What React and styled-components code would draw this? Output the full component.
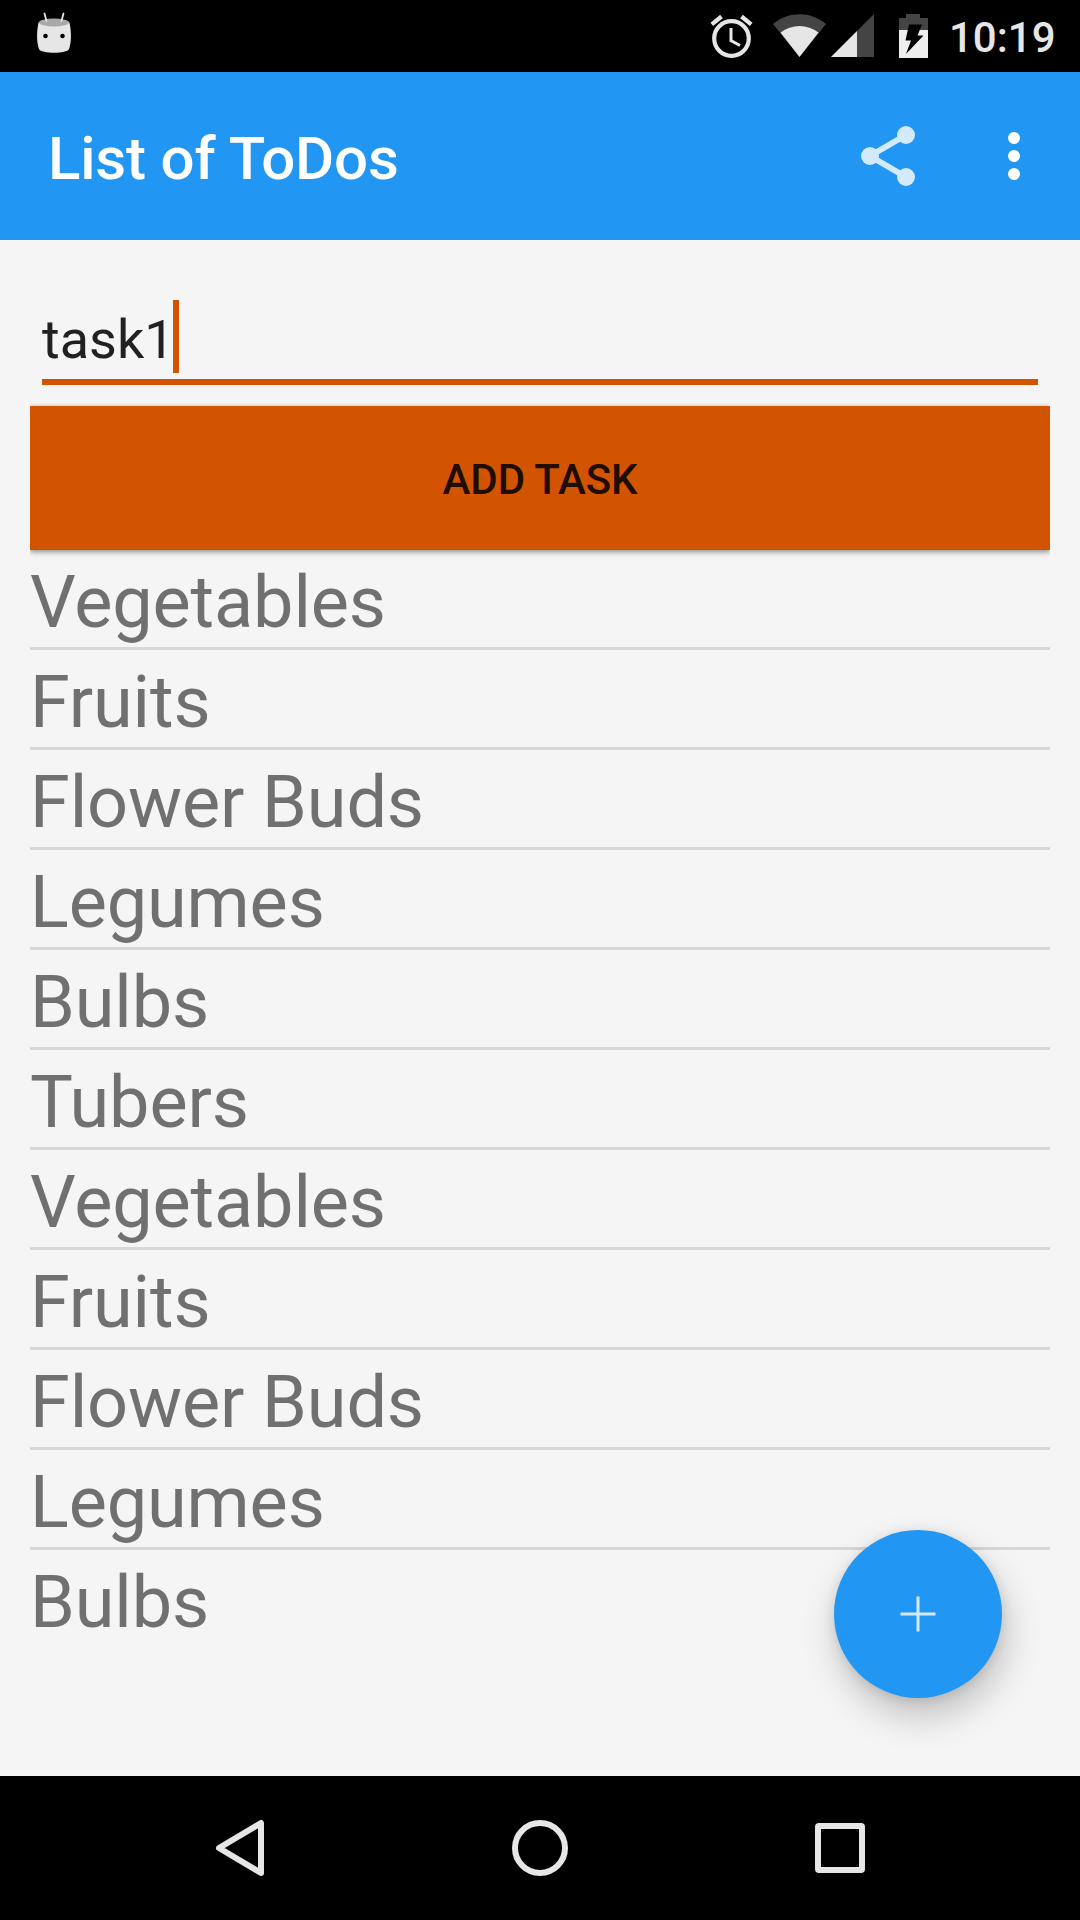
import React from "react";
import styled, { createGlobalStyle } from "styled-components";

const GlobalStyle = createGlobalStyle`
  * { box-sizing: border-box; }
  body { margin: 0; background: #f4f4f4; font-family: Roboto, sans-serif; }
`;

const Screen = styled.div`
  position: relative;
  display: flex;
  flex-direction: column;
  width: 1080px;
  height: 1920px;
  overflow: hidden;
  background: #f5f5f5;
`;

const StatusBar = styled.header`
  display: flex;
  justify-content: space-between;
  align-items: center;
  height: 72px;
  background: #000;
`;

const StatusGlyphs = styled.svg`
  display: block;
  width: ${(p) => p.$width}px;
  height: 72px;
`;

const StatusGroup = styled.div`
  display: flex;
  align-items: center;
`;

const Clock = styled.time`
  width: 131px;
  padding: 3px 0 0 0;
  color: #e6e6e6;
  font-size: 42px;
  font-weight: 500;
  line-height: 49px;
  white-space: nowrap;
`;

const AppBar = styled.div`
  display: flex;
  align-items: center;
  height: 168px;
  padding: 0 12px 0 48px;
  background: #2196f3;
`;

const Title = styled.h1`
  flex: 1;
  margin: 0;
  padding-top: 6px;
  color: #fff;
  font-size: 60px;
  font-weight: 500;
  letter-spacing: -0.17px;
  line-height: 70px;
`;

const ToolButton = styled.button`
  display: flex;
  justify-content: center;
  align-items: center;
  width: ${(p) => p.$width}px;
  height: 144px;
  padding: 0;
  border: 0;
  background: none;
`;

const Content = styled.main`
  flex: 1;
  padding: 60px 30px 0;
`;

const Field = styled.div`
  display: flex;
  height: 85px;
  margin: 0 12px 21px;
  border-bottom: 6px solid #d35400;
`;

const FieldText = styled.span`
  width: 131px;
  padding-top: 7px;
  color: #212121;
  font-size: 54px;
  line-height: 66px;
`;

const Caret = styled.span`
  width: 6px;
  height: 73px;
  background: #d35400;
`;

const AddButton = styled.button`
  display: block;
  width: 100%;
  height: 144px;
  padding: 2px 0 0;
  border: 0;
  background: #d35400;
  box-shadow: 0 3px 5px rgba(0, 0, 0, 0.28), 0 0 4px rgba(0, 0, 0, 0.22);
  clip-path: inset(-10px 0 -12px 0);
  color: #200d00;
  font-family: inherit;
  font-size: 42px;
  font-weight: 500;
  letter-spacing: -0.1px;
  line-height: 49px;
`;

const List = styled.ul`
  margin: 0;
  padding: 0;
  list-style: none;
`;

const Item = styled.li`
  height: 100px;
  padding-top: 11px;
  border-bottom: 3px solid #d7d7d7;
  color: #707070;
  font-size: 72px;
  letter-spacing: -0.12px;
  line-height: 84px;

  &:last-child { border-bottom: 0; }
`;

const Fab = styled.button`
  position: absolute;
  right: 78px;
  bottom: 222px;
  display: flex;
  justify-content: center;
  align-items: center;
  width: 168px;
  height: 168px;
  padding: 0;
  border: 0;
  border-radius: 50%;
  background: #2196f3;
  box-shadow: 4px 18px 36px rgba(0, 0, 0, 0.22), 0 2px 12px rgba(0, 0, 0, 0.11);
`;

const NavBar = styled.nav`
  display: flex;
  justify-content: center;
  height: 144px;
  background: #000;
`;

const NavButton = styled.button`
  display: flex;
  justify-content: center;
  align-items: center;
  width: 300px;
  padding: 0;
  border: 0;
  background: none;
`;

const tasks = [
  "Vegetables", "Fruits", "Flower Buds", "Legumes", "Bulbs", "Tubers",
  "Vegetables", "Fruits", "Flower Buds", "Legumes", "Bulbs",
];

function AndroidHead() {
  return (
    <StatusGlyphs $width={90} viewBox="0 0 90 72">
      <path d="M38.500 22.500C43 18 65 18 69.500 22.500C71.500 32 71.500 42 69 49C67 54 41 54 39 49C36.500 42 36.500 32 38.500 22.500Z" fill="#e6e6e6" />
      <ellipse cx="54" cy="22.500" rx="15" ry="4" fill="#a8a8a8" />
      <path d="M44.500 13.500L46.500 21M63.500 13.500L61.500 21" stroke="#e6e6e6" strokeWidth="1.800" strokeLinecap="round" />
      <circle cx="45.500" cy="36" r="2.300" fill="#000" />
      <circle cx="62.500" cy="36" r="2.300" fill="#000" />
    </StatusGlyphs>
  );
}

function SystemGlyphs() {
  return (
    <StatusGlyphs $width={243} viewBox="706 0 243 72">
      <g fill="none" stroke="#e6e6e6">
        <circle cx="731.500" cy="38.500" r="17.300" strokeWidth="4.200" />
        <path d="M731 28V40.500L740 45.500" strokeWidth="3" />
        <path d="M711.800 24.300L721.500 16.500M751.200 24.300L741.500 16.500" strokeWidth="4.200" />
      </g>
      <path d="M773 24C788.500 11 810.500 11 826 24L799.500 57Z" fill="#444" />
      <path d="M780.500 32.500C791.500 23.700 807.500 23.700 818.500 32.500L799.500 57Z" fill="#e6e6e6" />
      <path d="M874 14V57H831Z" fill="#444" />
      <path d="M857 31V57H831Z" fill="#e6e6e6" />
      <path d="M906 14H920V18H928V30H899V18H906Z" fill="#444" />
      <path d="M899 30H928V58H899Z" fill="#eee" />
      <path d="M909 24.500H922L917.500 35.500H923.500L906 54L911 40.500H905.500Z" fill="#000" />
    </StatusGlyphs>
  );
}

export default function App() {
  return (
    <>
      <GlobalStyle />
      <Screen>
        <StatusBar>
          <AndroidHead />
          <StatusGroup>
            <SystemGlyphs />
            <Clock>10:19</Clock>
          </StatusGroup>
        </StatusBar>
        <AppBar>
          <Title>List of ToDos</Title>
          <ToolButton $width={144} aria-label="Share">
            <svg width="72" height="72" viewBox="0 0 72 72" fill="#d3eafd">
              <path d="M54 15L18 36L54 57" fill="none" stroke="#d3eafd" strokeWidth="6" />
              <circle cx="54" cy="15" r="9" />
              <circle cx="18" cy="36" r="9" />
              <circle cx="54" cy="57" r="9" />
            </svg>
          </ToolButton>
          <ToolButton $width={108} aria-label="More options">
            <svg width="72" height="72" viewBox="0 0 72 72" fill="#fff">
              <circle cx="36" cy="18" r="6" />
              <circle cx="36" cy="36" r="6" />
              <circle cx="36" cy="54" r="6" />
            </svg>
          </ToolButton>
        </AppBar>
        <Content>
          <Field>
            <FieldText>task1</FieldText>
            <Caret />
          </Field>
          <AddButton>ADD TASK</AddButton>
          <List>
            {tasks.map((task, i) => <Item key={i}>{task}</Item>)}
          </List>
        </Content>
        <Fab aria-label="Add">
          <svg width="36" height="36" viewBox="0 0 36 36">
            <path d="M18 0.500V35.500M0.500 18H35.500" stroke="#d3eafd" strokeWidth="3" />
          </svg>
        </Fab>
        <NavBar>
          <NavButton aria-label="Back">
            <svg width="60" height="60" viewBox="0 0 60 60" fill="none" stroke="#e6e6e6">
              <path d="M51 5V55L9 30Z" strokeWidth="6" strokeLinejoin="round" />
            </svg>
          </NavButton>
          <NavButton aria-label="Home">
            <svg width="60" height="60" viewBox="0 0 60 60" fill="none" stroke="#e6e6e6">
              <circle cx="30" cy="30" r="25" strokeWidth="6" />
            </svg>
          </NavButton>
          <NavButton aria-label="Recents">
            <svg width="60" height="60" viewBox="0 0 60 60" fill="none" stroke="#e6e6e6">
              <rect x="8" y="8" width="44" height="44" rx="1" strokeWidth="6" />
            </svg>
          </NavButton>
        </NavBar>
      </Screen>
    </>
  );
}
